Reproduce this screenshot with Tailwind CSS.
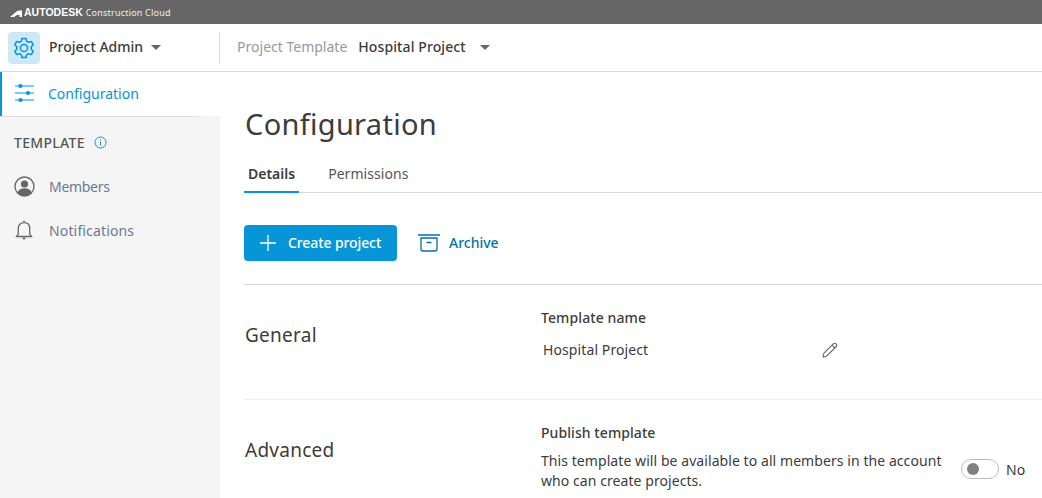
<!DOCTYPE html>
<html lang="en">
  <head>
    <meta charset="UTF-8" />
    <title>Project Admin - Configuration</title>
    <script src="https://cdn.jsdelivr.net/npm/@tailwindcss/browser@4"></script>
  </head>
  <body class="h-[498px] w-[1042px] overflow-hidden bg-white font-['Noto_Sans',sans-serif] text-[#3c3c3c]">
    <!-- top strip -->
    <div class="flex h-6 items-center bg-[#666666] pt-[2px] pl-[10px] text-white">
      <svg width="12" height="7" viewBox="0 0 12 7" fill="#fff"><path d="M0 7 L6.500 1.500 Q8 .5 9.500 .5 H12 V7 H9.500 V5 H7 L4 7 Z"/></svg>
      <span class="ml-[2px] font-['Liberation_Sans',sans-serif] text-[10.5px] font-bold">AUTODESK</span>
      <span class="ml-[3px] text-[9px] tracking-[0.2px] text-white/90">Construction Cloud</span>
    </div>

    <!-- header -->
    <header class="flex h-[48px] items-center border-b border-[#d9d9d9]">
      <div class="ml-2 flex h-8 w-8 items-center justify-center rounded bg-[#cde9f7]">
        <svg width="22" height="22" viewBox="0 0 22 22" fill="none" stroke="#0696d7" stroke-width="1.5" stroke-linejoin="round"><path d="M9 1.500h4l.7 2.800 1.900 1 2.700-.9 2 3.400-2.100 2v2.400l2.100 2-2 3.400-2.700-.9-1.900 1-.7 2.800H9l-.7-2.800-1.900-1-2.700.9-2-3.400 2.100-2V9.800l-2.100-2 2-3.400 2.700.9 1.900-1z"/><circle cx="11" cy="11" r="3.600"/></svg>
      </div>
      <span class="ml-[9px] -translate-y-px text-[14px] font-medium text-[#3c3c3c]">Project Admin</span>
      <svg class="ml-[8px]" width="10" height="5" viewBox="0 0 10 5" fill="#666"><path d="M0 0h10L5 5z"/></svg>
      <div class="ml-[58px] h-8 w-px bg-[#d9d9d9]"></div>
      <span class="ml-[17px] -translate-y-px text-[14px] text-[#999999]">Project Template</span>
      <span class="ml-[11px] -translate-y-px text-[14px] font-medium tracking-[0.1px] text-[#3c3c3c]">Hospital Project</span>
      <svg class="ml-[14px]" width="10" height="5" viewBox="0 0 10 5" fill="#666"><path d="M0 0h10L5 5z"/></svg>
    </header>

    <div class="flex h-[426px]">
      <!-- sidebar -->
      <aside class="w-[220px] shrink-0 bg-[#f5f5f5]">
        <div class="flex h-[44px] items-center border-l-2 border-[#0696d7] bg-white pb-[2px] pl-[13px] text-[14px] text-[#0696d7]">
          <svg width="19" height="20" viewBox="0 0 19 20" fill="#0696d7"><path d="M0 2.500h19v1H0zM0 9.500h19v1H0zM0 16.500h19v1H0z"/><circle cx="5.500" cy="3" r="2.100"/><circle cx="13" cy="10" r="2.100"/><circle cx="5.500" cy="17" r="2.100"/></svg>
          <span class="ml-[14px]">Configuration</span>
        </div>
        <div class="h-px bg-linear-to-r from-[#dddddd] from-85% to-[#f5f5f5] to-95%"></div>
        <div class="mt-[15px] flex items-center pl-[14px] text-[14px] font-medium tracking-[0.3px] text-[#555555]">
          TEMPLATE
          <svg class="ml-[9px]" width="13" height="13" viewBox="0 0 13 13" fill="none" stroke="#0696d7"><circle cx="6.500" cy="6.500" r="5.500"/><path d="M6.500 5.500v4M6.500 3.200v1.200"/></svg>
        </div>
        <div class="mt-[23px] flex items-center pl-[14px] text-[14px] text-[#6a7a90]">
          <svg width="21" height="21" viewBox="0 0 21 21"><circle cx="10.500" cy="10.500" r="9.500" fill="none" stroke="#666" stroke-width="1.300"/><circle cx="10.500" cy="8" r="3.600" fill="#666"/><path d="M3.500 16.500c1-3.200 3.600-4.300 7-4.300s6 1.100 7 4.300c-1.800 2-4.200 3.200-7 3.200s-5.200-1.200-7-3.200z" fill="#666"/></svg>
          <span class="ml-[14px] tracking-[-0.3px]">Members</span>
        </div>
        <div class="mt-[22px] flex items-center pl-[15px] text-[14px] text-[#6a7a90]">
          <svg width="18" height="22" viewBox="0 0 18 22" fill="none" stroke="#666" stroke-width="1.300"><path d="M1.500 17.500h15l-1.800-2.600V9.500c0-3.400-2.200-5.800-5.700-5.800S3.300 6.100 3.300 9.500v5.400zM9 1.500v2.200M7.500 19.500h3"/></svg>
          <span class="ml-4 tracking-[0.15px]">Notifications</span>
        </div>
      </aside>

      <!-- main -->
      <main class="min-w-0 flex-1 pl-6">
        <h1 class="mt-[31px] pl-px text-[29px] leading-[42px] font-normal tracking-[0.3px] text-[#3c3c3c]">Configuration</h1>
        <div class="mt-[18px] flex h-[30px] border-b border-[#d9d9d9] text-[14px]">
          <div class="h-[30px] border-b-2 border-[#0696d7] px-[4px] font-semibold">Details</div>
          <div class="ml-[29px] tracking-[0.05px] text-[#555555]">Permissions</div>
        </div>
        <div class="mt-8 flex items-center">
          <button class="flex h-9 w-[153px] items-center rounded-sm bg-[#0696d7] pl-4 text-[14px] font-medium text-white">
            <svg width="16" height="16" viewBox="0 0 16 16" stroke="#fff" stroke-width="1.300"><path d="M8 0v16M0 8h16"/></svg>
            <span class="ml-3 -translate-y-px tracking-[-0.1px]">Create project</span>
          </button>
          <svg class="ml-[21px]" width="22" height="18" viewBox="0 0 22 18" fill="none" stroke="#0670a8" stroke-width="1.300"><path d="M0 1h22M3 4h16v11a2 2 0 0 1-2 2H5a2 2 0 0 1-2-2zM8.500 8.500h5"/></svg>
          <span class="ml-[9px] -translate-y-px text-[14px] font-medium text-[#0670a8]">Archive</span>
        </div>
        <section class="mt-[23px] flex h-[115px] border-t border-[#d9d9d9]">
          <h2 class="mt-[36px] w-[297px] pl-px text-[19px] leading-[28px] tracking-[0.25px]">General</h2>
          <div class="mt-[22px] text-[14px] tracking-[0.1px]">
            <div class="font-medium">Template name</div>
            <div class="mt-[11px] flex items-center pl-[2px]">
              <span class="w-[279px]">Hospital Project</span>
              <svg width="16" height="16" viewBox="0 0 16 16" fill="none" stroke="#666" stroke-width="1.100" stroke-linejoin="round"><path d="M1 15l.8-3.600L11.500 1.700a1.600 1.600 0 0 1 2.300 0l.5.500a1.600 1.600 0 0 1 0 2.300L4.600 14.200zM10 3.200l2.800 2.800"/></svg>
            </div>
          </div>
        </section>
        <section class="flex border-t border-[#eeeeee]">
          <h2 class="mt-[36px] w-[297px] pl-px text-[19px] leading-[28px] tracking-[0.25px]">Advanced</h2>
          <div class="mt-[22px] text-[14px] tracking-[0.07px]">
            <div class="font-medium">Publish template</div>
            <div class="mt-[8px] flex items-center">
              <p class="w-[420px] leading-[20px]">This template will be available to all members in the account who can create projects.</p>
              <div class="flex h-5 w-[38px] -translate-y-[2px] items-center rounded-full border border-[#bbbbbb] pl-[5px]"><div class="h-3 w-3 rounded-full bg-[#808080]"></div></div>
              <span class="ml-[7px] -translate-y-[2px]">No</span>
            </div>
          </div>
        </section>
      </main>
    </div>
  </body>
</html>
